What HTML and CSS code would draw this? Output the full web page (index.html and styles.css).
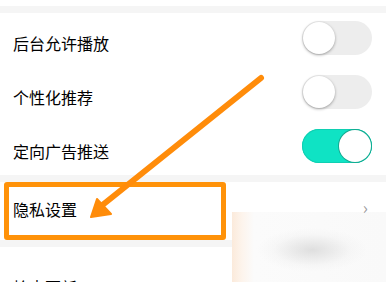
FILE: index.html
```html
<!DOCTYPE html>
<html lang="zh-CN">
<head>
<meta charset="utf-8">
<link rel="stylesheet" href="styles.css">
</head>
<body>
<div class="page">
  <div class="gap-top"></div>
  <div class="divider"></div>
  <div class="row"><span class="label">后台允许播放</span><span class="toggle"><span class="knob"></span></span></div>
  <div class="row"><span class="label">个性化推荐</span><span class="toggle"><span class="knob"></span></span></div>
  <div class="row"><span class="label">定向广告推送</span><span class="toggle on"><span class="knob"></span></span></div>
  <div class="divider"></div>
  <div class="row privacy"><span class="label">隐私设置</span><span class="chev">&#x203A;</span></div>
  <div class="divider"></div>
  <div class="row last"><span class="label">检查更新</span></div>

  <div class="blur"></div>
  <div class="highlight"></div>
  <svg class="arrow" width="386" height="282" viewBox="0 0 386 282">
    <line x1="261" y1="78" x2="100" y2="207" stroke="#ff8c0a" stroke-width="6" stroke-linecap="round"/>
    <polygon points="91,217 97,199 111,214" fill="#ff8c0a" stroke="#ff8c0a" stroke-width="2" stroke-linejoin="round"/>
  </svg>
</div>
</body>
</html>
```
FILE: styles.css
```css
html, body {
  margin: 0;
  padding: 0;
  background: #fff;
}
.page {
  position: relative;
  width: 386px;
  height: 282px;
  overflow: hidden;
  font-family: "Noto Sans CJK SC", "Noto Sans", sans-serif;
  color: #000;
}
.gap-top {
  height: 6px;
  background: #fff;
}
.divider {
  height: 7px;
  background: #f5f5f5;
}
.row {
  height: 54px;
  display: flex;
  align-items: center;
  justify-content: space-between;
  padding: 0 14px 0 13px;
  box-sizing: border-box;
}
.label {
  font-size: 16px;
  line-height: 20px;
  padding-top: 6px;
}
.toggle {
  position: relative;
  width: 70px;
  height: 34px;
  border-radius: 17px;
  background: #ededed;
  margin-bottom: 4px;
}
.knob {
  position: absolute;
  top: 1px;
  left: 1px;
  width: 32px;
  height: 32px;
  border-radius: 50%;
  background: #fff;
  box-shadow: 0 1px 3px rgba(0,0,0,0.35);
}
.toggle.on {
  background: #0fe3c4;
  box-shadow: inset 0 0 0 1px #10cfb2;
}
.toggle.on .knob {
  left: auto;
  right: 1px;
  box-shadow: 0 0 0 1px #14a990;
}
.privacy {
  height: 58px;
  align-items: flex-start;
}
.privacy .label {
  padding-top: 17px;
}
.chev {
  position: relative;
  z-index: 2;
  font-size: 17px;
  color: #9a9a9a;
  line-height: 18px;
  padding-top: 16px;
  padding-right: 4px;
}
.last {
  align-items: flex-start;
  padding-top: 24px;
}
.blur {
  position: absolute;
  left: 232px;
  top: 212px;
  width: 154px;
  height: 70px;
  background:
    radial-gradient(ellipse 55px 22px at 80px 38px, rgba(200,200,200,0.55), rgba(230,230,230,0.2) 70%, rgba(255,255,255,0) 100%),
    linear-gradient(90deg, #fbeadb 0, #fdf4ec 10px, #fbfbfb 22px, #f9f9f9 100%);
}
.highlight {
  position: absolute;
  left: 4px;
  top: 182px;
  width: 222px;
  height: 58px;
  box-sizing: border-box;
  border: 5px solid #ff9209;
  border-radius: 3px;
}
.arrow {
  position: absolute;
  left: 0;
  top: 0;
}
```
